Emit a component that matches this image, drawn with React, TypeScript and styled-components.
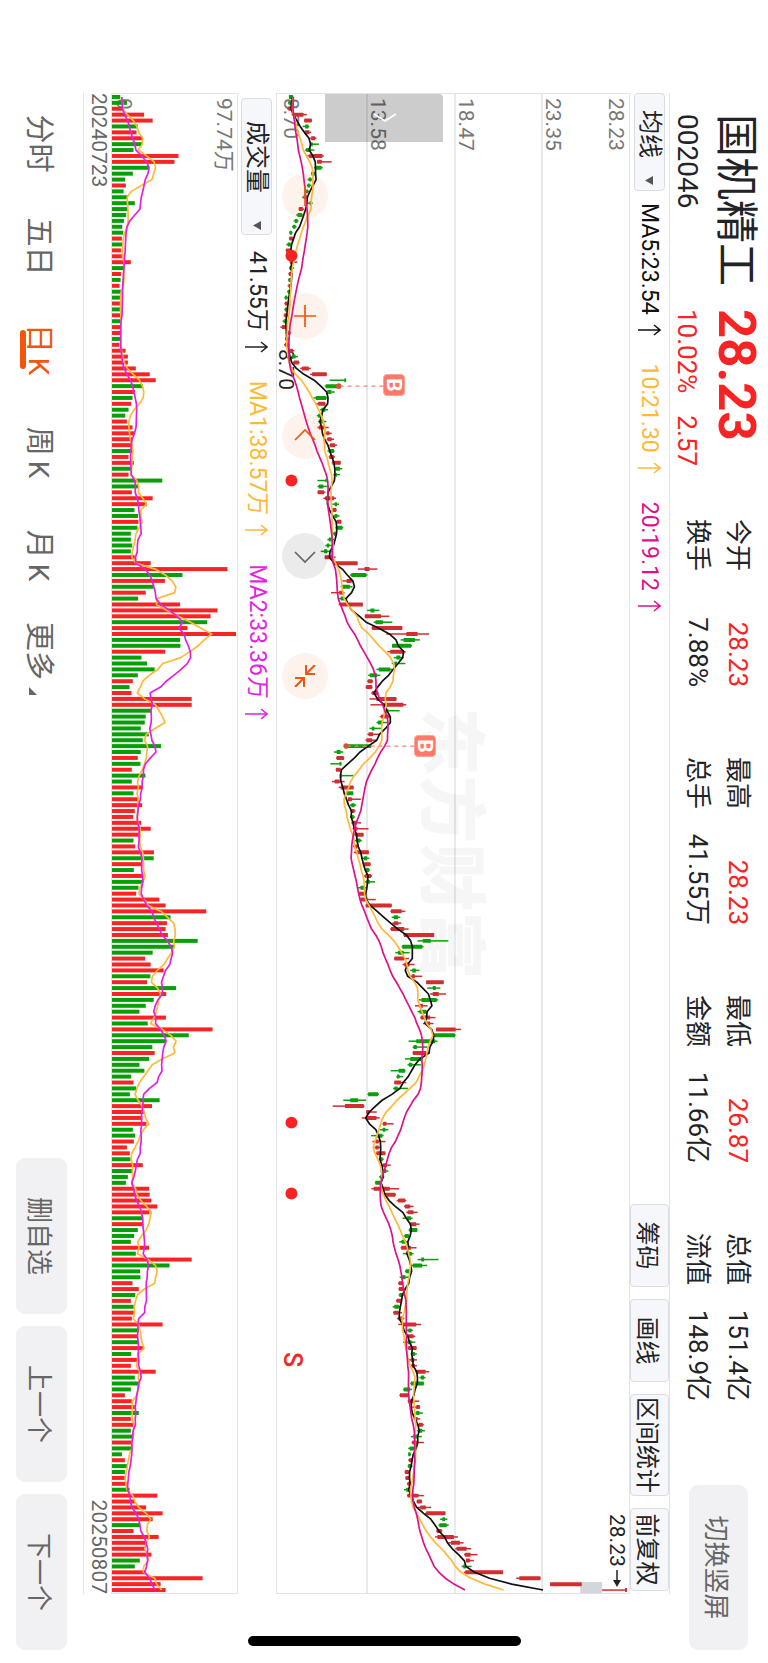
import React from 'react';
import styled, { createGlobalStyle } from 'styled-components';

/* ---------- data ---------- */

type Candle = { low: number; from: number; to: number; high: number; rising: boolean; close: number };
type Bar = { value: number; rising: boolean };

/* low, body bottom, body top, high, direction (u = up, d = down) */
const CANDLE_ROWS = `
36 36 48 50 d,33 35 46 46 d,30 34 44 46 u,44 50 80 90 u,82 82 105 105 u,77 85 95 97 d,82 84 98 103 u,100 103 115 119 u,
102 102 108 126 d,84 88 102 113 d,88 97 137 141 u,121 121 135 165 u,112 118 134 138 d,103 104 114 115 d,92 96 104 108 d,
90 92 100 104 d,84 86 94 97 d,76 80 90 94 d,90 98 104 108 d,65 66 78 82 u,58 62 76 78 d,50 54 62 65 d,45 48 56 59 d,
37 38 45 47 d,36 37 48 50 u,28 32 42 43 d,26 27 42 44 u,34 36 50 55 u,38 40 50 61 u,36 38 48 52 d,34 36 45 46 u,
33 35 43 44 d,32 35 42 43 u,30 33 40 41 d,22 24 31 34 d,22 24 33 36 u,22 24 32 35 d,20 22 32 34 u,17 20 29 31 d,
10 15 27 30 u,26 28 40 42 u,24 26 34 38 d,21 24 36 38 u,34 38 48 52 u,42 46 56 63 d,48 50 66 68 u,70 75 96 102 u,
100 106 150 150 u,159 203 208 209 d,144 147 184 188 d,150 152 164 174 d,110 117 148 152 d,118 124 145 147 u,
130 134 146 154 d,120 124 134 138 d,124 128 142 149 d,122 126 142 156 u,146 149 158 165 u,150 152 165 172 u,
158 160 175 181 u,152 156 172 174 d,156 158 172 175 u,165 167 192 192 u,174 177 190 197 d,170 178 181 190 d,
122 146 150 150 d,122 126 140 155 d,122 123 142 146 u,140 145 172 178 u,167 174 181 187 d,164 167 179 180 u,
170 174 182 189 d,177 180 194 194 u,176 181 197 200 d,168 171 178 181 d,152 156 165 172 d,146 150 158 170 d,
132 142 152 165 d,144 144 172 177 u,168 172 243 243 u,244 264 279 303 u,220 224 269 273 d,197 210 225 229 u,
192 197 220 228 d,163 188 200 204 u,187 192 204 212 d,186 190 259 259 u,272 282 294 309 d,265 265 314 339 u,
292 297 320 348 d,285 287 378 378 u,330 390 424 459 u,373 382 416 431 d,347 347 405 407 d,333 342 382 388 u,
352 360 372 382 d,346 354 362 387 d,300 307 342 347 d,275 280 302 312 d,272 274 288 290 u,267 269 287 288 u,
284 287 302 307 u,279 300 360 361 u,282 322 381 390 u,322 328 336 370 d,310 314 337 343 u,300 304 320 332 d,
279 286 294 314 d,273 276 290 310 u,267 270 287 302 u,208 210 284 285 d,172 180 192 200 d,178 180 202 203 u,
161 189 194 195 d,177 178 192 196 u,192 192 196 231 d,166 174 189 204 u,186 192 231 232 u,206 210 230 230 d,
214 214 226 253 u,220 224 234 239 d,220 224 234 237 u,220 224 232 235 d,224 228 240 254 u,228 232 242 276 u,
230 236 261 261 u,235 240 252 256 d,229 232 243 245 u,232 237 277 277 u,254 262 272 278 d,260 262 282 283 u,
264 268 278 280 d,262 266 284 287 u,264 270 280 296 d,244 252 264 270 d,246 248 264 270 u,250 252 274 298 u,
267 268 346 346 u,342 344 376 387 u,346 352 365 372 d,348 352 366 375 u,341 344 384 397 u,381 383 474 474 u,
424 440 464 517 d,376 378 438 442 d,357 365 382 400 d,353 354 384 398 u,379 384 400 415 u,402 408 419 430 d,
397 406 416 438 u,450 450 503 503 u,453 470 479 493 d,462 470 488 510 u,428 436 482 486 d,416 429 440 454 u,
424 430 450 454 d,432 434 462 478 u,440 450 462 472 u,480 480 539 555 u,470 472 537 539 d,397 420 477 484 d,
409 412 422 454 d,409 410 450 460 u,386 402 438 440 d,394 398 408 434 d,343 367 386 388 d,360 362 370 381 d,
354 354 374 390 u,350 354 364 395 d,273 275 305 308 d,200 221 245 269 d,168 205 262 264 u,269 269 280 301 u,
256 270 300 310 u,318 320 330 352 u,310 319 327 336 d,284 302 318 322 d,288 297 307 327 u,294 297 307 314 u,
298 300 327 327 u,307 309 319 322 d,314 320 332 343 u,312 322 330 336 d,308 311 321 324 d,295 297 312 314 d,
285 292 340 368 u,322 324 357 359 u,361 365 387 390 u,383 386 402 412 u,390 394 412 424 u,379 392 404 409 d,
400 402 420 430 u,397 399 423 424 d,382 386 398 402 d,369 376 388 397 d,373 375 404 421 u,380 394 407 412 d,
424 435 444 487 d,407 410 438 453 d,386 388 402 407 d,370 374 388 400 d,365 367 380 382 u,366 368 381 384 u,
367 369 380 384 d,359 361 376 377 u,349 354 368 374 d,350 352 367 377 u,362 366 378 384 u,366 377 420 435 u,
392 396 406 410 d,390 394 412 417 u,380 394 406 417 d,394 396 421 421 u,404 408 416 422 d,397 404 414 422 u,
404 406 416 422 u,417 422 448 459 u,430 434 444 448 d,402 404 443 443 d,381 382 402 407 d,369 371 396 397 u,
394 396 412 429 u,407 420 431 432 u,417 420 430 440 d,412 416 424 432 u,420 428 440 443 u,422 428 438 446 d,
404 410 424 437 d,406 408 422 443 u,396 400 414 415 d,395 396 403 404 d,396 398 409 409 u,394 396 406 409 d,
385 386 398 402 u,387 388 400 401 u,392 394 404 405 u,383 390 402 404 d,392 394 427 443 u,421 422 437 438 u,
424 432 449 465 u,447 450 508 508 u,492 499 507 514 d,487 490 512 518 d,480 482 497 499 u,477 484 534 546 u,
517 525 552 563 u,538 542 572 586 u,564 567 584 605 u,570 570 582 594 u,557 562 570 587 d,564 568 682 682 u,
722 731 795 795 u,824 824 919 919 u,981 1050 1056 1056 u`;

const VOLUME_ROW = `
25g 45g 34r 97r 123r 78g 74r 91r 91g 65g 201r 189r 112g 63g 40g 42r 35g 48g 69g 48g 43g 36g 31g 34g 30r 32g 27r 34r 57r
37g 27r 26g 23r 27g 27g 27r 25g 27r 27g 28r 27r 26g 22r 41r 48r 48r 72r 114r 132r 94g 69r 62g 58r 50g 40g 45r 62r 68r
62r 62r 62g 50r 66r 57g 50r 152g 80g 60r 123r 105r 68g 79g 80r 77g 57g 57g 61g 57g 69r 117r 349r 213g 160r 125g 102r
79g 206r 319r 298r 288g 228r 375r 206g 207g 161r 89g 106g 129g 78g 63r 53g 59r 241r 241r 119g 102g 99g 87g 111g 93g
148g 87g 78r 86g 60r 101g 60g 92r 65g 81r 91r 69r 64r 88r 117r 86r 65g 70r 127r 126g 88r 66g 94r 94g 80g 73r 143r 162r
285r 177g 166r 162r 169r 259g 188g 123g 100r 117r 156r 116g 106r 194g 164r 126g 102g 83g 163r 108g 304r 232g 163g 122g
129r 112g 83g 98g 58g 65r 73g 54g 144g 121r 96r 92r 104r 63g 70g 66r 45r 54r 56g 93r 61g 48g 42g 112r 114r 119r 137r
113r 92g 94r 78g 67g 57g 112r 72g 241r 174g 85g 86g 62r 81r 70g 57r 66g 66r 60r 153r 81g 77r 80g 94r 58g 78r 57r 132r
69g 82g 57g 39r 60r 69r 81g 57r 64r 57g 62g 58r 59g 30g 39r 46g 39g 42r 44r 53g 137r 69r 103r 153r 123r 84g 65r 141r
105r 101r 119r 84g 69g 100r 274r 147r 162r`;

const candles: Candle[] = CANDLE_ROWS.trim().split(',').map(row => {
  const [low, from, to, high, way] = row.trim().split(' ');
  const rising = way === 'u';
  return { low: +low, from: +from, to: +to, high: +high, rising, close: rising ? +to : +from };
});

const bars: Bar[] = VOLUME_ROW.trim().split(/\s+/).map(cell => ({
  value: parseInt(cell, 10),
  rising: cell.endsWith('r'),
}));

/* ---------- chart geometry ---------- */

const PLOT_WIDTH = 1501;
const PRICE_HEIGHT = 354;
const VOLUME_HEIGHT = 126;
const SLOT = PLOT_WIDTH / candles.length;
const UNIT = 3;

const xAt = (index: number) => (index + 0.5) * SLOT;
const priceY = (value: number) => PRICE_HEIGHT - value / UNIT;
const volumeY = (value: number) => VOLUME_HEIGHT - value / UNIT;

function averagePoints(values: number[], span: number, before: number, toY: (v: number) => number) {
  const history = [...Array(span - 1).fill(before), ...values];
  return values
    .map((_, i) => {
      const sum = history.slice(i, i + span).reduce((a: number, b: number) => a + b, 0);
      return `${xAt(i).toFixed(1)},${toY(sum / span).toFixed(1)}`;
    })
    .join(' ');
}

const closes = candles.map(c => c.close);
const volumes = bars.map(b => b.value);

const color = {
  text: '#222326',
  muted: '#666666',
  axis: '#777777',
  red: '#f92323',
  candleUp: '#d22d31',
  candleDown: '#0aa00a',
  amber: '#ffb937',
  pink: '#e0108a',
  magenta: '#e41fe6',
  orange: '#f0570c',
  line: '#e0e3e8',
  chip: '#f6f7fb',
  button: '#f1f1f4',
};

/* ---------- page ---------- */

const GlobalStyle = createGlobalStyle`
  * { box-sizing: border-box; }
  html, body { margin: 0; background: #fff; }
  body, button {
    font-family: Roboto, "Noto Sans CJK SC", sans-serif;
  }
  button { cursor: pointer; border: 0; padding: 0; margin: 0; white-space: nowrap; }
`;

const Viewport = styled.div`
  position: relative;
  width: 100vw;
  height: 100vh;
  overflow: hidden;
`;

/* The page is shown sideways: its width is the window's height. */
const Screen = styled.div`
  position: relative;
  display: flex;
  flex-direction: column;
  width: 100vh;
  height: 100vw;
  background: #fff;
  color: ${color.text};
  transform-origin: 0 0;
  transform: translateX(100vw) rotate(90deg);
`;

const Header = styled.header`
  display: flex;
  flex: none;
  height: 98px;
  padding: 0 13px 0 114px;
`;

const Quote = styled.div`
  display: grid;
  grid-template-columns: 195px 210px;
  grid-template-rows: 64px 34px;
  align-items: center;
  white-space: nowrap;
`;

const StockName = styled.h1`
  margin: 0;
  font-size: 43px;
  line-height: 64px;
  font-weight: 400;
`;

const LastPrice = styled.strong`
  color: ${color.red};
  font-size: 51px;
  line-height: 62px;
  font-weight: 700;
`;

const StockCode = styled.span`
  font-size: 28px;
  line-height: 34px;
`;

const Change = styled.span`
  display: flex;
  gap: 22px;
  color: ${color.red};
  font-size: 26px;
  line-height: 34px;
`;

const Stats = styled.dl`
  display: grid;
  grid-template-columns: repeat(4, 168px);
  grid-template-rows: 40px 40px;
  grid-auto-flow: column;
  column-gap: 70px;
  align-content: start;
  margin: 0;
  padding-top: 10px;
`;

const Stat = styled.div`
  display: flex;
  justify-content: space-between;
  align-items: center;
  white-space: nowrap;
  font-size: 26px;
  line-height: 40px;
`;

const StatLabel = styled.dt``;

const StatValue = styled.dd<{ $hot?: boolean }>`
  margin: 0;
  color: ${p => (p.$hot ? color.red : 'inherit')};
`;

const SoftButton = styled.button<{ $tall?: boolean }>`
  width: ${p => (p.$tall ? 165 : 156)}px;
  height: ${p => (p.$tall ? 59 : 51)}px;
  border-radius: 9px;
  background: ${color.button};
  color: ${color.muted};
  font-size: 26px;
`;

const SwitchSlot = styled.div`
  margin-left: auto;
  padding-top: 20px;
`;

const Main = styled.main`
  display: flex;
  flex: 1;
  flex-direction: column;
  min-height: 0;
  margin: 0 69px 0 93px;
`;

const Toolbar = styled.div<{ $top?: boolean }>`
  display: flex;
  flex: none;
  align-items: center;
  height: ${p => (p.$top ? 40 : 38)}px;
  border-top: ${p => (p.$top ? `1px solid ${color.line}` : '0')};
  padding-left: ${p => (p.$top ? 0 : 5)}px;
`;

const Picker = styled.button<{ $wide?: boolean }>`
  display: flex;
  align-items: center;
  gap: ${p => (p.$wide ? 28 : 18)}px;
  width: ${p => (p.$wide ? 137 : 98)}px;
  height: 31px;
  padding-left: ${p => (p.$wide ? 22 : 16)}px;
  border: 1px solid #d9dce2;
  border-radius: 4px;
  background: ${color.chip};
  color: ${color.text};
  font-size: 24px;
  line-height: 29px;
`;

const Legend = styled.div<{ $wide?: boolean }>`
  display: flex;
  gap: 28px;
  margin-left: ${p => (p.$wide ? 16 : 12)}px;
`;

const LegendItem = styled.span<{ $tone: string }>`
  display: flex;
  align-items: center;
  gap: 9px;
  color: ${p => p.$tone};
  font-size: 23px;
  line-height: 30px;
  white-space: nowrap;
`;

const Tools = styled.div`
  display: flex;
  align-self: stretch;
  gap: 12px;
  margin-left: auto;
  margin-right: 3px;
`;

const ToolButton = styled.button<{ $wide?: boolean }>`
  width: ${p => (p.$wide ? 102 : 83)}px;
  border: 1px solid #d9dce2;
  border-radius: 4px;
  background: ${color.chip};
  color: ${color.text};
  font-size: 24px;
`;

const PricePlot = styled.section`
  position: relative;
  display: flex;
  flex: 352 0 0;
  flex-direction: column;
  border: 1px solid ${color.line};
`;

const Band = styled.div<{ $last?: boolean }>`
  display: flex;
  flex: 1;
  flex-direction: column;
  justify-content: flex-end;
  padding: 0 4px ${p => (p.$last ? 4 : 0)}px;
  & + & { border-top: 2px solid #e6e9ee; }
`;

const AxisLabel = styled.span<{ $start?: boolean }>`
  margin-bottom: ${p => (p.$start ? 'auto' : '0')};
  padding-top: ${p => (p.$start ? 3 : 0)}px;
  color: ${color.axis};
  font-size: 21px;
  line-height: 20px;
`;

const Watermark = styled.div`
  position: absolute;
  inset: 0;
  display: flex;
  align-items: center;
  justify-content: center;
  padding-top: 5px;
  color: rgba(0, 0, 0, 0.035);
  font-size: 68px;
  font-weight: 900;
  line-height: 80px;
`;

const Drawing = styled.svg`
  position: absolute;
  inset: 0;
  display: block;
  width: 100%;
  height: 100%;
`;

const Note = styled.span<{ $x: number; $y: number }>`
  position: absolute;
  left: ${p => p.$x}px;
  top: ${p => p.$y}px;
  display: flex;
  align-items: center;
  gap: 3px;
  font-size: 21px;
  line-height: 24px;
`;

const TradeMark = styled.span<{ $x: number; $y: number }>`
  position: absolute;
  left: ${p => p.$x}px;
  top: ${p => p.$y}px;
  width: 22px;
  height: 22px;
  border: 1px solid #ffa396;
  border-radius: 4px;
  background: #ff7868;
  color: #fff;
  font-size: 21px;
  font-weight: 700;
  line-height: 21px;
  text-align: center;
`;

const SellMark = styled.span`
  position: absolute;
  left: 1258px;
  bottom: 2px;
  color: ${color.red};
  font-size: 25px;
  font-weight: 500;
  line-height: 26px;
`;

const Handle = styled.button`
  position: absolute;
  left: 0;
  top: 186px;
  width: 48px;
  height: 118px;
  border-radius: 4px 0 0 0;
  background: rgba(0, 0, 0, 0.2);
  color: #fff;
`;

const Floating = styled.div`
  position: absolute;
  left: 79px;
  bottom: 5px;
  display: flex;
  gap: 74px;
`;

const RoundButton = styled.button<{ $gray?: boolean }>`
  display: flex;
  align-items: center;
  justify-content: center;
  width: 46px;
  height: 46px;
  border-radius: 50%;
  background: ${p => (p.$gray ? 'rgba(0, 0, 0, 0.08)' : 'rgba(240, 87, 12, 0.08)')};
  color: ${p => (p.$gray ? '#666' : color.orange)};
`;

const VolumePlot = styled.section`
  position: relative;
  display: flex;
  flex: 120 0 0;
  flex-direction: column;
  justify-content: space-between;
  padding: 3px 4px 2px;
  border: 1px solid ${color.line};
`;

const Dates = styled.div`
  display: flex;
  flex: none;
  justify-content: space-between;
  height: 27px;
  color: ${color.muted};
  font-size: 21px;
  line-height: 25px;
`;

const Footer = styled.footer`
  display: flex;
  flex: none;
  height: 83px;
  padding-right: 13px;
`;

const Periods = styled.nav`
  display: grid;
  grid-template-columns: repeat(6, 103px);
  margin-left: 92px;
`;

const Period = styled.button<{ $active?: boolean }>`
  position: relative;
  height: 83px;
  padding-top: 5px;
  background: none;
  color: ${p => (p.$active ? color.orange : color.muted)};
  font-size: 29px;
  line-height: 78px;
  &::after {
    content: '';
    position: absolute;
    left: 32px;
    top: 57px;
    width: 39px;
    height: 6px;
    border-radius: 3px;
    background: ${p => (p.$active ? color.orange : 'transparent')};
  }
`;

const Suffix = styled.span`
  margin-left: 5px;
  font-size: 28px;
`;

const FooterRule = styled.div`
  flex: none;
  height: 1px;
  margin: 0 69px 0 93px;
  background: ${color.line};
`;

const Actions = styled.div`
  display: flex;
  gap: 12px;
  margin-left: auto;
  padding-top: 16px;
`;

const HomeBar = styled.div`
  position: absolute;
  right: 17px;
  top: 50%;
  width: 10px;
  height: 273px;
  margin-top: -137px;
  border-radius: 5px;
  background: #000;
`;

/* ---------- small drawings ---------- */

const DownMark = () => (
  <svg width="9" height="8" viewBox="0 0 9 8" aria-hidden="true">
    <path d="M0 0H9L4.500 8Z" fill="#555" />
  </svg>
);

const UpArrow = () => (
  <svg width="12" height="23" viewBox="0 0 12 23" fill="none" stroke="currentColor" strokeWidth="1.500" aria-hidden="true">
    <path d="M6 23V1M1 7L6 1L11 7" />
  </svg>
);

const RoundIcon = ({ d, weight = 1.7 }: { d: string; weight?: number }) => (
  <svg width="22" height="22" viewBox="0 0 22 22" fill="none" stroke="currentColor" strokeWidth={weight} aria-hidden="true">
    <path d={d} />
  </svg>
);

const PriceDrawing = () => (
  <Drawing viewBox={`0 0 ${PLOT_WIDTH} ${PRICE_HEIGHT}`} preserveAspectRatio="none" aria-hidden="true">
    <rect x="1490" y="27" width="11" height="22" fill="#d3d6da" />
    {candles.map((c, i) => (
      <g key={i} fill={c.rising ? color.candleUp : color.candleDown}>
        <rect x={xAt(i) - 0.75} y={priceY(c.high)} width="1.500" height={(c.high - c.low) / UNIT} />
        <rect x={xAt(i) - 2} y={priceY(c.to)} width="4" height={(c.to - c.from) / UNIT} rx="0.500" />
      </g>
    ))}
    <g fill="none" strokeWidth="1.700" strokeLinejoin="round">
      <polyline points={averagePoints(closes, 5, 50, priceY)} stroke="#111" />
      <polyline points={averagePoints(closes, 10, 50, priceY)} stroke={color.amber} />
      <polyline points={averagePoints(closes, 20, 50, priceY)} stroke={color.pink} />
    </g>
    <g stroke="#ff8072" strokeWidth="1.400" strokeDasharray="4 4">
      <path d={`M${xAt(49)} 247V290`} />
      <path d={`M${xAt(110)} 216V284`} />
    </g>
    <g fill="#cc5a2c">
      <circle cx={xAt(49)} cy="292" r="2.800" />
      <circle cx={xAt(110)} cy="284.500" r="2.800" />
    </g>
    <g fill={color.red}>
      {[162, 387, 1030, 1101].map(x => (
        <circle key={x} cx={x} cy="339.500" r="6" />
      ))}
    </g>
  </Drawing>
);

const VolumeDrawing = () => (
  <Drawing viewBox={`0 0 ${PLOT_WIDTH} ${VOLUME_HEIGHT}`} preserveAspectRatio="none" aria-hidden="true">
    {bars.map((b, i) => (
      <rect
        key={i}
        x={xAt(i) - 2}
        y={volumeY(b.value)}
        width="4"
        height={b.value / UNIT}
        fill={b.rising ? color.red : '#06a006'}
      />
    ))}
    <g fill="none" strokeWidth="1.700" strokeLinejoin="round">
      <polyline points={averagePoints(volumes, 5, 30, volumeY)} stroke={color.amber} />
      <polyline points={averagePoints(volumes, 10, 30, volumeY)} stroke={color.magenta} />
    </g>
  </Drawing>
);

/* ---------- content ---------- */

const stats: { label: string; value: string; hot?: boolean }[] = [
  { label: '今开', value: '28.23', hot: true },
  { label: '换手', value: '7.88%' },
  { label: '最高', value: '28.23', hot: true },
  { label: '总手', value: '41.55万' },
  { label: '最低', value: '26.87', hot: true },
  { label: '金额', value: '11.66亿' },
  { label: '总值', value: '151.4亿' },
  { label: '流值', value: '148.9亿' },
];

export default function App() {
  return (
    <>
      <GlobalStyle />
      <Viewport>
        <Screen lang="zh-CN">
          <Header>
            <Quote>
              <StockName>国机精工</StockName>
              <LastPrice>28.23</LastPrice>
              <StockCode>002046</StockCode>
              <Change>
                <span>10.02%</span>
                <span>2.57</span>
              </Change>
            </Quote>
            <Stats>
              {stats.map(s => (
                <Stat key={s.label}>
                  <StatLabel>{s.label}</StatLabel>
                  <StatValue $hot={s.hot}>{s.value}</StatValue>
                </Stat>
              ))}
            </Stats>
            <SwitchSlot>
              <SoftButton $tall>切换竖屏</SoftButton>
            </SwitchSlot>
          </Header>

          <Main>
            <Toolbar $top>
              <Picker>
                均线
                <DownMark />
              </Picker>
              <Legend>
                <LegendItem $tone="#111">MA5:23.54<UpArrow /></LegendItem>
                <LegendItem $tone={color.amber}>10:21.30<UpArrow /></LegendItem>
                <LegendItem $tone={color.pink}>20:19.12<UpArrow /></LegendItem>
              </Legend>
              <Tools>
                <ToolButton>筹码</ToolButton>
                <ToolButton>画线</ToolButton>
                <ToolButton $wide>区间统计</ToolButton>
                <ToolButton>前复权</ToolButton>
              </Tools>
            </Toolbar>

            <PricePlot>
              <Watermark>东方财富</Watermark>
              <Band>
                <AxisLabel $start>28.23</AxisLabel>
                <AxisLabel>23.35</AxisLabel>
              </Band>
              <Band><AxisLabel>18.47</AxisLabel></Band>
              <Band><AxisLabel>13.58</AxisLabel></Band>
              <Band $last><AxisLabel>8.70</AxisLabel></Band>
              <Note $x={255} $y={331}>8.70</Note>
              <PriceDrawing />
              <TradeMark $x={280} $y={224}>B</TradeMark>
              <TradeMark $x={641} $y={193}>B</TradeMark>
              <SellMark>S</SellMark>
              <Note $x={1420} $y={0}>
                28.23
                <svg width="17" height="8" viewBox="0 0 17 8" aria-hidden="true">
                  <path d="M0 4H11" stroke="#222" strokeWidth="1.500" />
                  <path d="M10 0L17 4L10 8Z" fill="#222" />
                </svg>
              </Note>
              <Handle aria-label="展开">
                <RoundIcon d="M7 0L14 11L7 22" />
              </Handle>
              <Floating>
                <RoundButton aria-label="缩小"><RoundIcon d="M1 11H21" /></RoundButton>
                <RoundButton aria-label="放大"><RoundIcon d="M0 11H22M11 0V22" /></RoundButton>
                <RoundButton aria-label="左移"><RoundIcon d="M15 1L5 11L15 21" /></RoundButton>
                <RoundButton $gray aria-label="右移"><RoundIcon d="M7 1L17 11L7 21" /></RoundButton>
                <RoundButton aria-label="收起">
                  <RoundIcon weight={2} d="M0 1L9 10M9 1V10H0M22 21L13 12M13 21V12H22" />
                </RoundButton>
              </Floating>
            </PricePlot>

            <Toolbar>
              <Picker $wide>
                成交量
                <DownMark />
              </Picker>
              <Legend $wide>
                <LegendItem $tone={color.text}>41.55万<UpArrow /></LegendItem>
                <LegendItem $tone={color.amber}>MA1:38.57万<UpArrow /></LegendItem>
                <LegendItem $tone={color.magenta}>MA2:33.36万<UpArrow /></LegendItem>
              </Legend>
            </Toolbar>

            <VolumePlot>
              <AxisLabel>97.74万</AxisLabel>
              <AxisLabel>0</AxisLabel>
              <VolumeDrawing />
            </VolumePlot>

            <Dates>
              <span>20240723</span>
              <span>20250807</span>
            </Dates>
          </Main>

          <FooterRule />
          <Footer>
            <Periods>
              <Period>分时</Period>
              <Period>五日</Period>
              <Period $active>日<Suffix>K</Suffix></Period>
              <Period>周<Suffix>K</Suffix></Period>
              <Period>月<Suffix>K</Suffix></Period>
              <Period>
                更多{' '}
                <svg width="8" height="8" viewBox="0 0 8 8" aria-hidden="true">
                  <path d="M8 0V8H0Z" fill="#666" />
                </svg>
              </Period>
            </Periods>
            <Actions>
              <SoftButton>删自选</SoftButton>
              <SoftButton>上一个</SoftButton>
              <SoftButton>下一个</SoftButton>
            </Actions>
          </Footer>
          <HomeBar />
        </Screen>
      </Viewport>
    </>
  );
}
